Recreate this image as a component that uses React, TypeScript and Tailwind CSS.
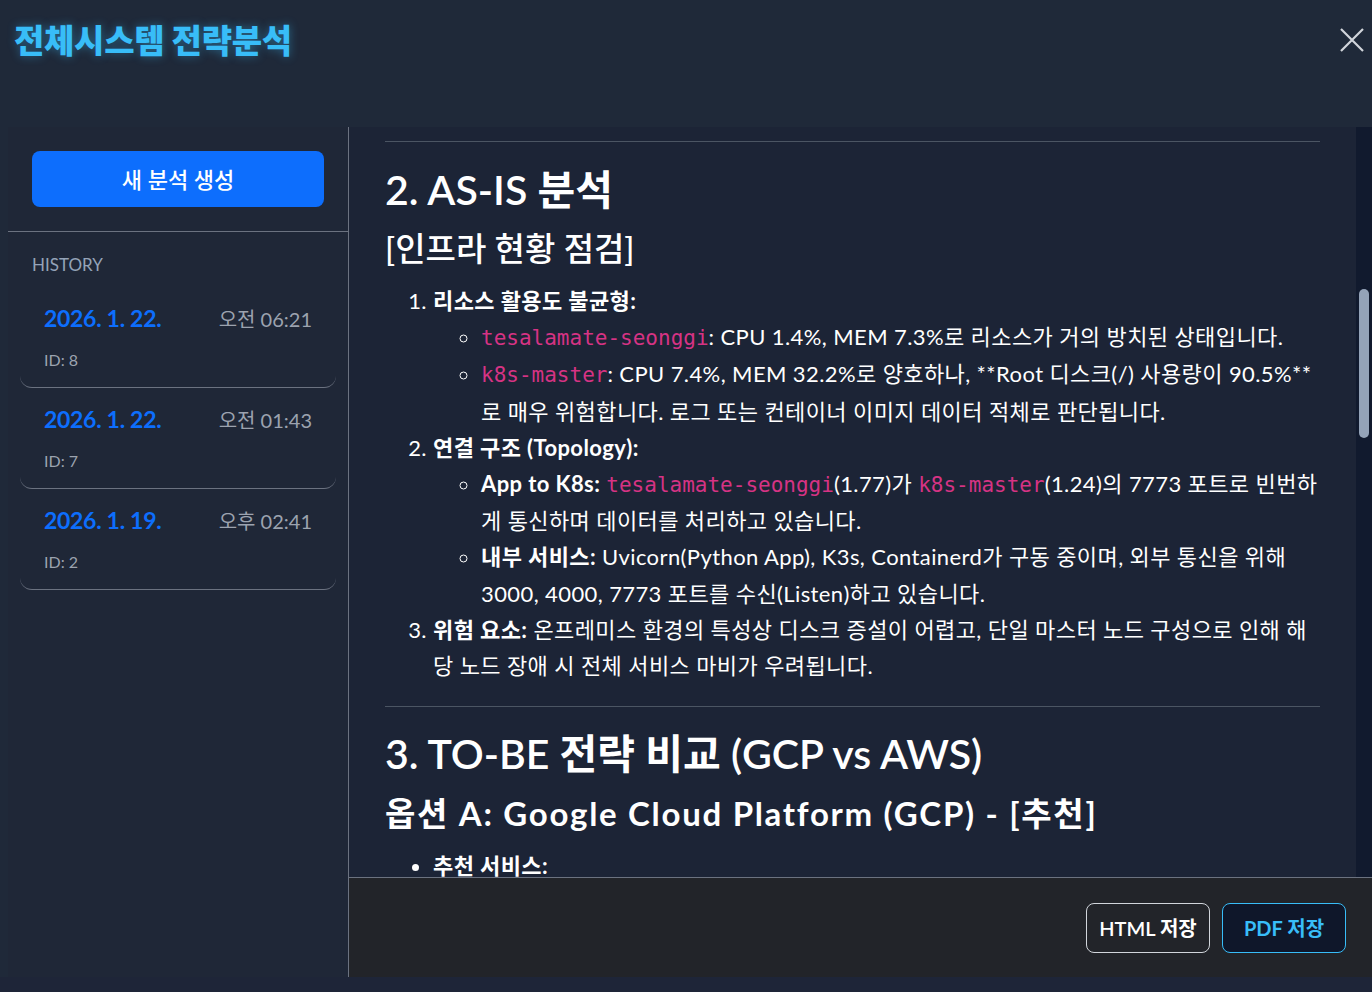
const font = { fontFamily: "Lato, 'Noto Sans CJK KR', sans-serif" };

const history = [
  { date: '2026. 1. 22.', time: '오전 06:21', id: 8 },
  { date: '2026. 1. 22.', time: '오전 01:43', id: 7 },
  { date: '2026. 1. 19.', time: '오후 02:41', id: 2 },
];

function Code({ children }: { children: string }) {
  return (
    <code
      className="text-[21px] tracking-normal text-[#d63384]"
      style={{ fontFamily: "'DejaVu Sans Mono', 'Liberation Mono', monospace" }}
    >
      {children}
    </code>
  );
}

export default function App() {
  return (
    <div className="w-[1372px] h-[992px] bg-[#1e2538] text-white overflow-hidden flex flex-col" style={font}>
      <header className="h-[127px] shrink-0 bg-[#1f2939] flex items-start justify-between pl-[14px] pr-[8px] pt-[16px]">
        <h1 className="text-[33px] font-extrabold text-[#38bdf8] tracking-[-0.3px] [text-shadow:0_0_10px_rgba(56,189,248,0.45)]">
          전체시스템 전략분석
        </h1>
        <button className="mt-[12px] text-[#d1d5db]">
          <svg width="24" height="24" viewBox="0 0 24 24" fill="none" stroke="currentColor" strokeWidth="2.2">
            <path d="M1 1L23 23M23 1L1 23" />
          </svg>
        </button>
      </header>

      <div className="flex h-[850px] bg-[#1f2939]">
        <aside className="ml-2 w-[341px] shrink-0 bg-[#1f2737] border-r border-[#6b7280] flex flex-col">
          <div className="px-6 pt-6 pb-6 border-b border-[#6b7280]">
            <button className="w-full h-[56px] rounded-lg bg-[#0d6efd] text-[22px] font-medium text-white">새 분석 생성</button>
          </div>
          <div className="px-6 pt-[20px] text-[17px] text-[#94a3b8]">HISTORY</div>
          <div className="px-3 mt-[9px] flex flex-col">
            {history.map((h) => (
              <div key={h.id} className="rounded-b-xl border-b border-[#6b7280] px-6 pt-[18px] pb-[15px]">
                <div className="flex items-center justify-between h-[28px]">
                  <span className="text-[23px] font-bold text-[#0d6efd] tracking-[-0.3px]">{h.date}</span>
                  <span className="text-[20px] text-[#9ca3af]">{h.time}</span>
                </div>
                <div className="mt-[15px] text-[16px] text-[#9ca3af] leading-[24px]">ID: {h.id}</div>
              </div>
            ))}
          </div>
        </aside>

        <section className="flex-1 flex flex-col min-w-0">
          <div className="flex flex-1 min-h-0 bg-[#1c2436]">
            <div className="flex-1 overflow-hidden pl-9 pr-9 pt-[14px]">
              <hr className="border-[#4b5563]" />
              <h2 className="mt-[24px] text-[41px] font-semibold leading-[48px]">2. AS-IS 분석</h2>
              <h3 className="mt-[15px] text-[33px] font-medium leading-[38px]">[인프라 현황 점검]</h3>
              <ol className="mt-[16px] list-decimal pl-12 text-[22px] leading-[36.2px] tracking-[0.4px]">
                <li>
                  <strong>리소스 활용도 불균형:</strong>
                  <ul className="list-[circle] pl-12">
                    <li>
                      <Code>tesalamate-seonggi</Code>: CPU 1.4%, MEM 7.3%로 리소스가 거의 방치된 상태입니다.
                    </li>
                    <li>
                      <Code>k8s-master</Code>: CPU 7.4%, MEM 32.2%로 양호하나, **Root 디스크(/) 사용량이 90.5%**로 매우 위험합니다. 로그 또는 컨테이너 이미지 데이터 적체로 판단됩니다.
                    </li>
                  </ul>
                </li>
                <li>
                  <strong>연결 구조 (Topology):</strong>
                  <ul className="list-[circle] pl-12">
                    <li>
                      <strong>App to K8s:</strong> <Code>tesalamate-seonggi</Code>(1.77)가 <Code>k8s-master</Code>(1.24)의 7773 포트로 빈번하게 통신하며 데이터를 처리하고 있습니다.
                    </li>
                    <li>
                      <strong>내부 서비스:</strong> Uvicorn(Python App), K3s, Containerd가 구동 중이며, 외부 통신을 위해 3000, 4000, 7773 포트를 수신(Listen)하고 있습니다.
                    </li>
                  </ul>
                </li>
                <li>
                  <strong>위험 요소:</strong> 온프레미스 환경의 특성상 디스크 증설이 어렵고, 단일 마스터 노드 구성으로 인해 해당 노드 장애 시 전체 서비스 마비가 우려됩니다.
                </li>
              </ol>
              <hr className="mt-[22px] border-[#4b5563]" />
              <h2 className="mt-[23px] text-[41px] font-semibold leading-[48px]">3. TO-BE 전략 비교 (GCP vs AWS)</h2>
              <h3 className="mt-[16px] text-[33px] font-bold leading-[38px] tracking-[1.7px]">옵션 A: Google Cloud Platform (GCP) - [추천]</h3>
              <ul className="mt-[16px] list-disc pl-12 text-[22px] leading-[36.2px] tracking-[0.4px]">
                <li>
                  <strong>추천 서비스:</strong>
                </li>
              </ul>
            </div>
            <div className="w-[16px] shrink-0 bg-[#111a2e] px-[3px]">
              <div className="mt-[162px] h-[149px] rounded-full bg-[#94a3b8]" />
            </div>
          </div>
          <footer className="h-[100px] shrink-0 bg-[#222429] border-t border-[#6b7280] flex items-center justify-end gap-3 pr-[26px]">
            <button className="h-[50px] w-[124px] rounded-lg border border-[#d1d5db] text-[20px] font-semibold text-white">HTML 저장</button>
            <button className="h-[50px] w-[124px] rounded-lg border border-[#38bdf8] bg-[#0f172a] text-[20px] font-bold text-[#38bdf8]">PDF 저장</button>
          </footer>
        </section>
      </div>
    </div>
  );
}
